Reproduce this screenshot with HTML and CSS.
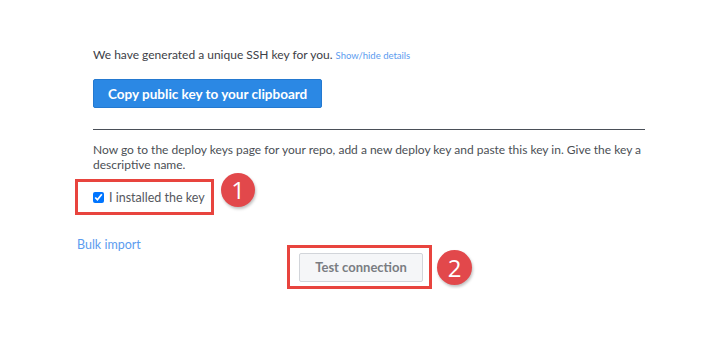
FILE: index.html
```html
<!DOCTYPE html>
<html lang="en">
<head>
  <meta charset="UTF-8" />
  <title>Deploy key</title>
  <link rel="stylesheet" href="styles.css">
</head>
<body>
  <div class="page">
    <div class="panel">
      <p class="intro">We have generated a unique SSH key for you. <a href="#" class="small-link">Show/hide details</a></p>
      <button type="button" class="btn-primary">Copy public key to your clipboard</button>
      <hr class="divider">
      <p class="instructions">Now go to the deploy keys page for your repo, add a new deploy key and paste this key in. Give the key a descriptive name.</p>
    </div>

    <div class="step-row step-one">
      <div class="callout">
        <label class="check">
          <input type="checkbox" checked>
          <span>I installed the key</span>
        </label>
      </div>
      <span class="badge">1</span>
    </div>

    <a href="#" class="bulk-link">Bulk import</a>

    <div class="step-row step-two">
      <div class="callout callout-btn">
        <button type="button" class="btn-default">Test connection</button>
      </div>
      <span class="badge">2</span>
    </div>
  </div>
</body>
</html>
```

FILE: styles.css
```css
:root {
  --blue: #2b88e4;
  --link: #5c9cef;
  --text: #3d4147;
  --annot: #e8443e;
}

* {
  box-sizing: border-box;
}

body {
  margin: 0;
  background: #fff;
  font-family: 'Lato', sans-serif;
  color: var(--text);
}

.page {
  padding: 46px 0 0 75px;
}

.panel {
  width: 570px;
  padding-left: 18px;
}

.intro {
  margin: 0;
  font-size: 12px;
  line-height: 18px;
}

.small-link {
  color: var(--link);
  font-size: 9.5px;
  text-decoration: none;
}

.btn-primary {
  margin-top: 14px;
  height: 29px;
  padding: 0 14px;
  font-family: 'Lato', sans-serif;
  font-size: 13.5px;
  font-weight: 700;
  color: #fff;
  background: var(--blue);
  border: 1px solid #2479d0;
  border-radius: 2px;
}

.divider {
  margin: 21px 0 0;
  border: 0;
  border-top: 1px solid #4a4f58;
}

.instructions {
  margin: 12px 0 0;
  font-size: 12px;
  line-height: 15px;
  color: #4b4f55;
}

.step-row {
  display: flex;
  align-items: center;
  gap: 7px;
}

.step-one {
  margin-top: 7px;
}

.callout {
  border: 3px solid var(--annot);
  height: 36px;
  width: 139px;
  display: flex;
  align-items: center;
  padding-left: 15px;
}

.check {
  display: flex;
  align-items: center;
  gap: 5px;
  font-size: 12.5px;
  color: #55585e;
}

.check input {
  margin: 0;
  width: 11px;
  height: 11px;
}

.badge {
  width: 34px;
  height: 34px;
  border-radius: 50%;
  background: #e2484b;
  color: #fff;
  font-family: 'Open Sans', sans-serif;
  font-size: 24px;
  line-height: 34px;
  text-align: center;
  box-shadow: 1px 2px 3px rgba(0, 0, 0, 0.25);
}

.step-one .badge {
  align-self: flex-start;
  margin-top: -6px;
}

.bulk-link {
  display: block;
  margin-top: 22px;
  margin-left: 2px;
  font-size: 12.5px;
  color: var(--link);
  text-decoration: none;
}

.step-two {
  margin-top: -7px;
  padding-left: 212px;
  gap: 5px;
}

.callout-btn {
  width: 145px;
  height: 44px;
  padding-left: 9px;
}

.btn-default {
  height: 29px;
  width: 124px;
  font-family: 'Lato', sans-serif;
  font-size: 13px;
  font-weight: 700;
  color: #7a7d82;
  background: #f5f6f8;
  border: 1px solid #d2d5da;
  border-radius: 2px;
}

.step-two .badge {
  width: 35px;
  height: 35px;
  line-height: 35px;
}
```
